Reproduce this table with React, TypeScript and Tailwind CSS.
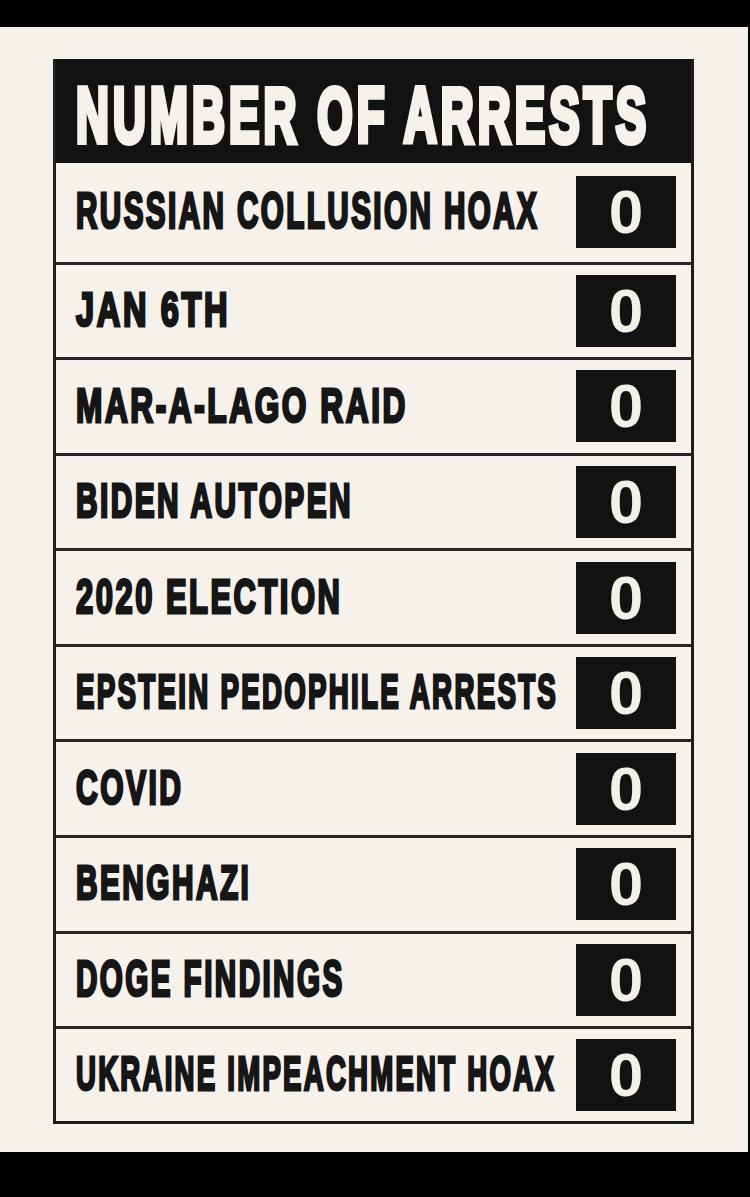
import React from "react";

type Row = { label: string; cls: string; h: string; border: boolean };

const rows: Row[] = [
  {
    label: "RUSSIAN COLLUSION HOAX",
    cls: "text-[29.65px] tracking-[2.42px] [-webkit-text-stroke:1.82px_#161616] scale-y-[1.653]",
    h: "h-[101.5px]",
    border: true,
  },
  {
    label: "JAN 6TH",
    cls: "text-[32.54px] tracking-[2.66px] [-webkit-text-stroke:1.99px_#161616] scale-y-[1.506]",
    h: "h-[95.6px]",
    border: true,
  },
  {
    label: "MAR-A-LAGO RAID",
    cls: "text-[31.61px] tracking-[2.58px] [-webkit-text-stroke:1.94px_#161616] scale-y-[1.55]",
    h: "h-[95.6px]",
    border: true,
  },
  {
    label: "BIDEN AUTOPEN",
    cls: "text-[29.84px] tracking-[2.44px] [-webkit-text-stroke:1.83px_#161616] scale-y-[1.642]",
    h: "h-[95.6px]",
    border: true,
  },
  {
    label: "2020 ELECTION",
    cls: "text-[30.92px] tracking-[2.52px] [-webkit-text-stroke:1.89px_#161616] scale-y-[1.585]",
    h: "h-[95.6px]",
    border: true,
  },
  {
    label: "EPSTEIN PEDOPHILE ARRESTS",
    cls: "text-[27.73px] tracking-[2.26px] [-webkit-text-stroke:1.7px_#161616] scale-y-[1.767]",
    h: "h-[95.6px]",
    border: true,
  },
  {
    label: "COVID",
    cls: "text-[30.04px] tracking-[2.45px] [-webkit-text-stroke:1.84px_#161616] scale-y-[1.631]",
    h: "h-[95.6px]",
    border: true,
  },
  {
    label: "BENGHAZI",
    cls: "text-[29.84px] tracking-[2.44px] [-webkit-text-stroke:1.83px_#161616] scale-y-[1.642]",
    h: "h-[95.6px]",
    border: true,
  },
  {
    label: "DOGE FINDINGS",
    cls: "text-[29.65px] tracking-[2.42px] [-webkit-text-stroke:1.82px_#161616] scale-y-[1.653]",
    h: "h-[95.6px]",
    border: true,
  },
  {
    label: "UKRAINE IMPEACHMENT HOAX",
    cls: "text-[27.59px] tracking-[2.25px] [-webkit-text-stroke:1.69px_#161616] scale-y-[1.776]",
    h: "h-[92px]",
    border: false,
  },
];

export default function App() {
  return (
    <div className="w-[750px] h-[1197px] bg-black flex flex-col font-['Liberation_Sans',Arial,sans-serif]">
      <div className="h-[27px] shrink-0" />
      <div className="h-[1125px] w-[748px] shrink-0 bg-[#f6f1eb] pt-[32px] pl-[53px]">
        <div className="w-[641px] border-x-[3px] border-b-[3px] border-[#1e1e1e]">
          <div className="h-[104px] bg-[#121212] flex items-center pl-[20px] pt-[10px]">
            <span className="inline-block scale-y-[1.692] whitespace-nowrap leading-none font-bold text-[45.5px] tracking-[4.14px] text-[#f6f1eb] [-webkit-text-stroke:3.55px_#f6f1eb]">
              NUMBER OF ARRESTS
            </span>
          </div>
          {rows.map((r) => (
            <div
              key={r.label}
              className={`${r.h} flex items-center pl-[20px] pr-[15px] ${
                r.border ? "border-b-[3px] border-[#262626]" : ""
              }`}
            >
              <div className="flex-1 min-w-0">
                <span
                  className={`inline-block whitespace-nowrap leading-none font-bold text-[#161616] ${r.cls}`}
                >
                  {r.label}
                </span>
              </div>
              <div className="w-[100px] h-[72px] shrink-0 bg-[#121212] flex items-center justify-center">
                <span className="font-bold text-[62px] leading-none text-[#f3efe9]">0</span>
              </div>
            </div>
          ))}
        </div>
      </div>
      <div className="flex-1" />
    </div>
  );
}
